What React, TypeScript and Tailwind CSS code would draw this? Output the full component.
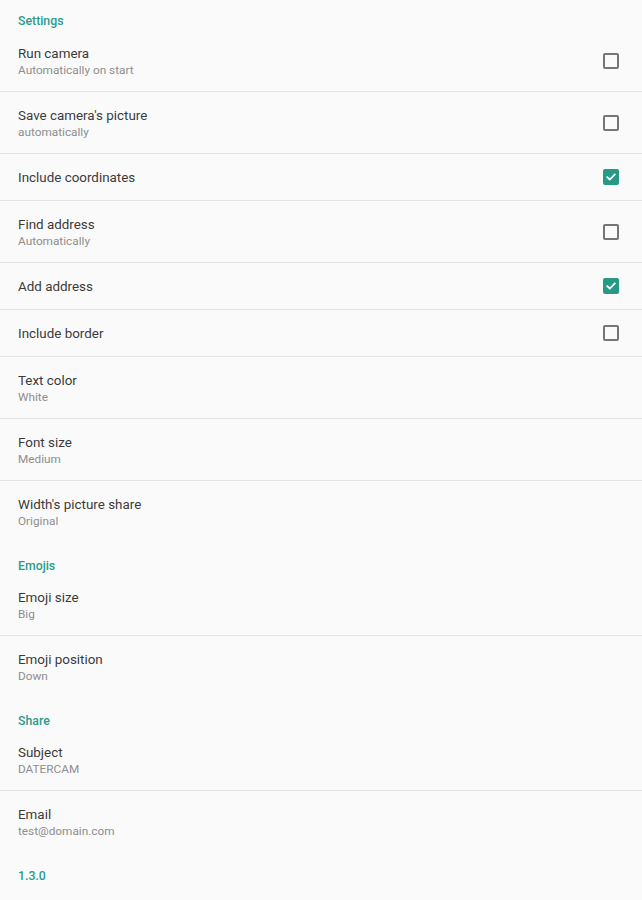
import React from "react";

type Item = {
  title: string;
  summary?: string;
  check?: boolean;
  divider?: boolean;
};

type Section = { header: string; items: Item[] };

const SECTIONS: Section[] = [
  {
    header: "Settings",
    items: [
      { title: "Run camera", summary: "Automatically on start", check: false, divider: true },
      { title: "Save camera's picture", summary: "automatically", check: false, divider: true },
      { title: "Include coordinates", check: true, divider: true },
      { title: "Find address", summary: "Automatically", check: false, divider: true },
      { title: "Add address", check: true, divider: true },
      { title: "Include border", check: false, divider: true },
      { title: "Text color", summary: "White", divider: true },
      { title: "Font size", summary: "Medium", divider: true },
      { title: "Width's picture share", summary: "Original" },
    ],
  },
  {
    header: "Emojis",
    items: [
      { title: "Emoji size", summary: "Big", divider: true },
      { title: "Emoji position", summary: "Down" },
    ],
  },
  {
    header: "Share",
    items: [
      { title: "Subject", summary: "DATERCAM", divider: true },
      { title: "Email", summary: "test@domain.com" },
    ],
  },
];

function CheckBox({ checked }: { checked: boolean }) {
  if (checked) {
    return (
      <div className="flex h-[16px] w-[16px] items-center justify-center rounded-[2px] bg-[#279a86]">
        <svg width="12" height="12" viewBox="0 0 24 24" fill="none" stroke="white" strokeWidth="3.5" strokeLinecap="square">
          <polyline points="4.5 12.5 9.5 17 19.5 7" />
        </svg>
      </div>
    );
  }
  return <div className="h-[16px] w-[16px] rounded-[2px] border-2 border-[#757575]" />;
}

function Header({ text, first }: { text: string; first?: boolean }) {
  return (
    <div
      className={`px-[18px] text-[12.3px] font-medium leading-[14px] text-[#2a9d8a] ${
        first ? "h-[30px] pt-[14px]" : "h-[31px] pt-[16px]"
      }`}
    >
      {text}
    </div>
  );
}

function Row({ item }: { item: Item }) {
  return (
    <div
      className={`flex items-center pl-[18px] pr-[23px] ${item.summary ? "h-[62px]" : "h-[47px]"} ${
        item.divider ? "border-b border-[#e3e3e3]" : ""
      }`}
    >
      <div className={`flex flex-1 flex-col ${item.summary ? "mt-[2px]" : ""}`}>
        <span className="text-[13.4px] leading-[17px] text-[#3a3a3a]">{item.title}</span>
        {item.summary && (
          <span className="text-[11.8px] leading-[17px] text-[#8e8e8e]">{item.summary}</span>
        )}
      </div>
      {item.check !== undefined && <CheckBox checked={item.check} />}
    </div>
  );
}

export default function App() {
  return (
    <div className="min-h-[900px] w-full bg-[#fafafa] font-['Roboto',sans-serif]">
      {SECTIONS.map((s, i) => (
        <div key={s.header}>
          <Header text={s.header} first={i === 0} />
          {s.items.map((it) => (
            <Row key={it.title} item={it} />
          ))}
        </div>
      ))}
      <Header text="1.3.0" />
    </div>
  );
}
